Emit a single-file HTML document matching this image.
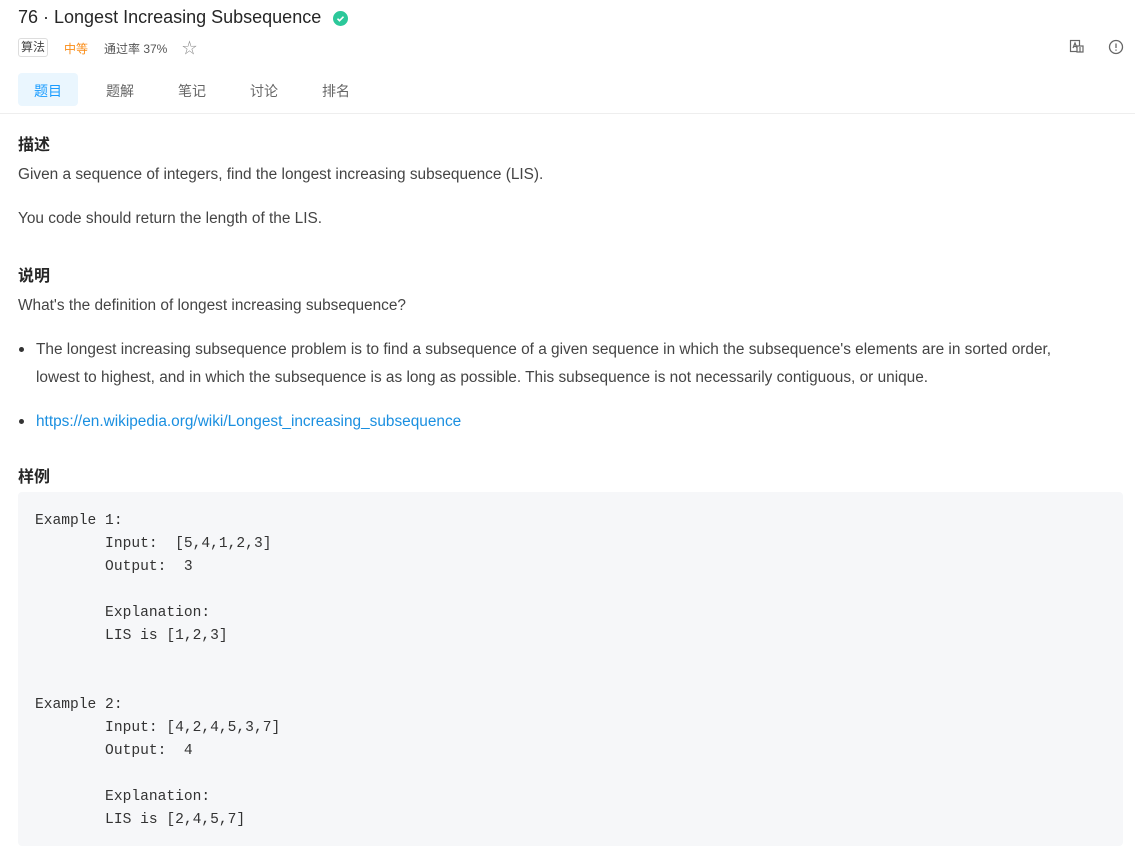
<!DOCTYPE html>
<html><head><meta charset="utf-8"><style>
*{margin:0;padding:0;box-sizing:border-box}
body{width:1135px;height:854px;background:#fff;font-family:"Liberation Sans","Noto Sans CJK SC",sans-serif;color:#333;position:relative;overflow:hidden}
.a{position:absolute;white-space:nowrap}
h1{font-size:18px;font-weight:normal;color:#262626}
.p{font-size:15.4px;color:#444}
.h{font-size:16px;font-weight:bold;color:#262626}
pre.a{font-family:"Liberation Mono",monospace;font-size:14.6px;line-height:23px;color:#333;white-space:pre}
</style></head><body>
<div class="a" style="left:18px;top:7px"><h1>76 · Longest Increasing Subsequence</h1></div>
<svg class="a" style="left:333px;top:11px" width="15" height="15" viewBox="0 0 15 15"><circle cx="7.5" cy="7.5" r="7.5" fill="#2cc89a"/><path d="M4.5 7.7l2 2 4-4" stroke="#fff" stroke-width="1.6" fill="none"/></svg>
<div class="a" style="left:18px;top:38px;height:19px;width:30px;border:1px solid #ddd;border-radius:3px;font-size:12px;line-height:17px;text-align:center;color:#444">算法</div>
<div class="a" style="left:64px;top:40px;font-size:12px;color:#fa8c16">中等</div>
<div class="a" style="left:104px;top:40px;font-size:12px;color:#555">通过率 37%</div>
<div class="a" style="left:182px;top:37px;font-size:15px;color:#888">☆</div>
<svg class="a" style="left:1069px;top:39px" width="16" height="16" viewBox="0 0 16 16" fill="none" stroke="#666" stroke-width="1.2"><rect x="1.5" y="1.5" width="9" height="11"/><rect x="8" y="7" width="6" height="6" fill="#fff"/><path d="M4 9l2-5 2 5M4.8 7.5h2.4M11 8v5"/></svg>
<svg class="a" style="left:1108px;top:39px" width="16" height="16" viewBox="0 0 16 16" fill="none" stroke="#666" stroke-width="1.3"><circle cx="8" cy="8" r="6.5"/><path d="M8 4.5v4.5M8 10.5v1.2"/></svg>
<div class="a" style="left:18px;top:73px;width:60px;height:33px;background:#eaf6fe;border-radius:4px"></div>
<div class="a" style="left:34px;top:81px;font-size:14px;color:#1a9cff">题目</div>
<div class="a" style="left:106px;top:81px;font-size:14px;color:#666">题解</div>
<div class="a" style="left:178px;top:81px;font-size:14px;color:#666">笔记</div>
<div class="a" style="left:250px;top:81px;font-size:14px;color:#666">讨论</div>
<div class="a" style="left:322px;top:81px;font-size:14px;color:#666">排名</div>
<div class="a" style="left:0;top:113px;width:1135px;height:1px;background:#eee"></div>
<div class="a h" style="left:18px;top:131px">描述</div>
<div class="a p" style="left:18px;top:166px">Given a sequence of integers, find the longest increasing subsequence (LIS).</div>
<div class="a p" style="left:18px;top:210px">You code should return the length of the LIS.</div>
<div class="a h" style="left:18px;top:262px">说明</div>
<div class="a p" style="left:18px;top:297px">What's the definition of longest increasing subsequence?</div>
<div class="a" style="left:19px;top:347px;width:5px;height:5px;border-radius:50%;background:#333"></div>
<div class="a p" style="left:36px;top:341px">The longest increasing subsequence problem is to find a subsequence of a given sequence in which the subsequence's elements are in sorted order,</div>
<div class="a p" style="left:36px;top:369px">lowest to highest, and in which the subsequence is as long as possible. This subsequence is not necessarily contiguous, or unique.</div>
<div class="a" style="left:19px;top:419px;width:5px;height:5px;border-radius:50%;background:#333"></div>
<div class="a p" style="left:36px;top:413px;color:#1a8fe0">https://en.wikipedia.org/wiki/Longest_increasing_subsequence</div>
<div class="a h" style="left:18px;top:463px">样例</div>
<div class="a" style="left:18px;top:492px;width:1105px;height:354px;background:#f6f7f9;border-radius:4px"></div>
<pre class="a" style="left:35px;top:510px">Example 1:
        Input:  [5,4,1,2,3]
        Output:  3

        Explanation:
        LIS is [1,2,3]


Example 2:
        Input: [4,2,4,5,3,7]
        Output:  4

        Explanation:
        LIS is [2,4,5,7]</pre>
</body></html>
